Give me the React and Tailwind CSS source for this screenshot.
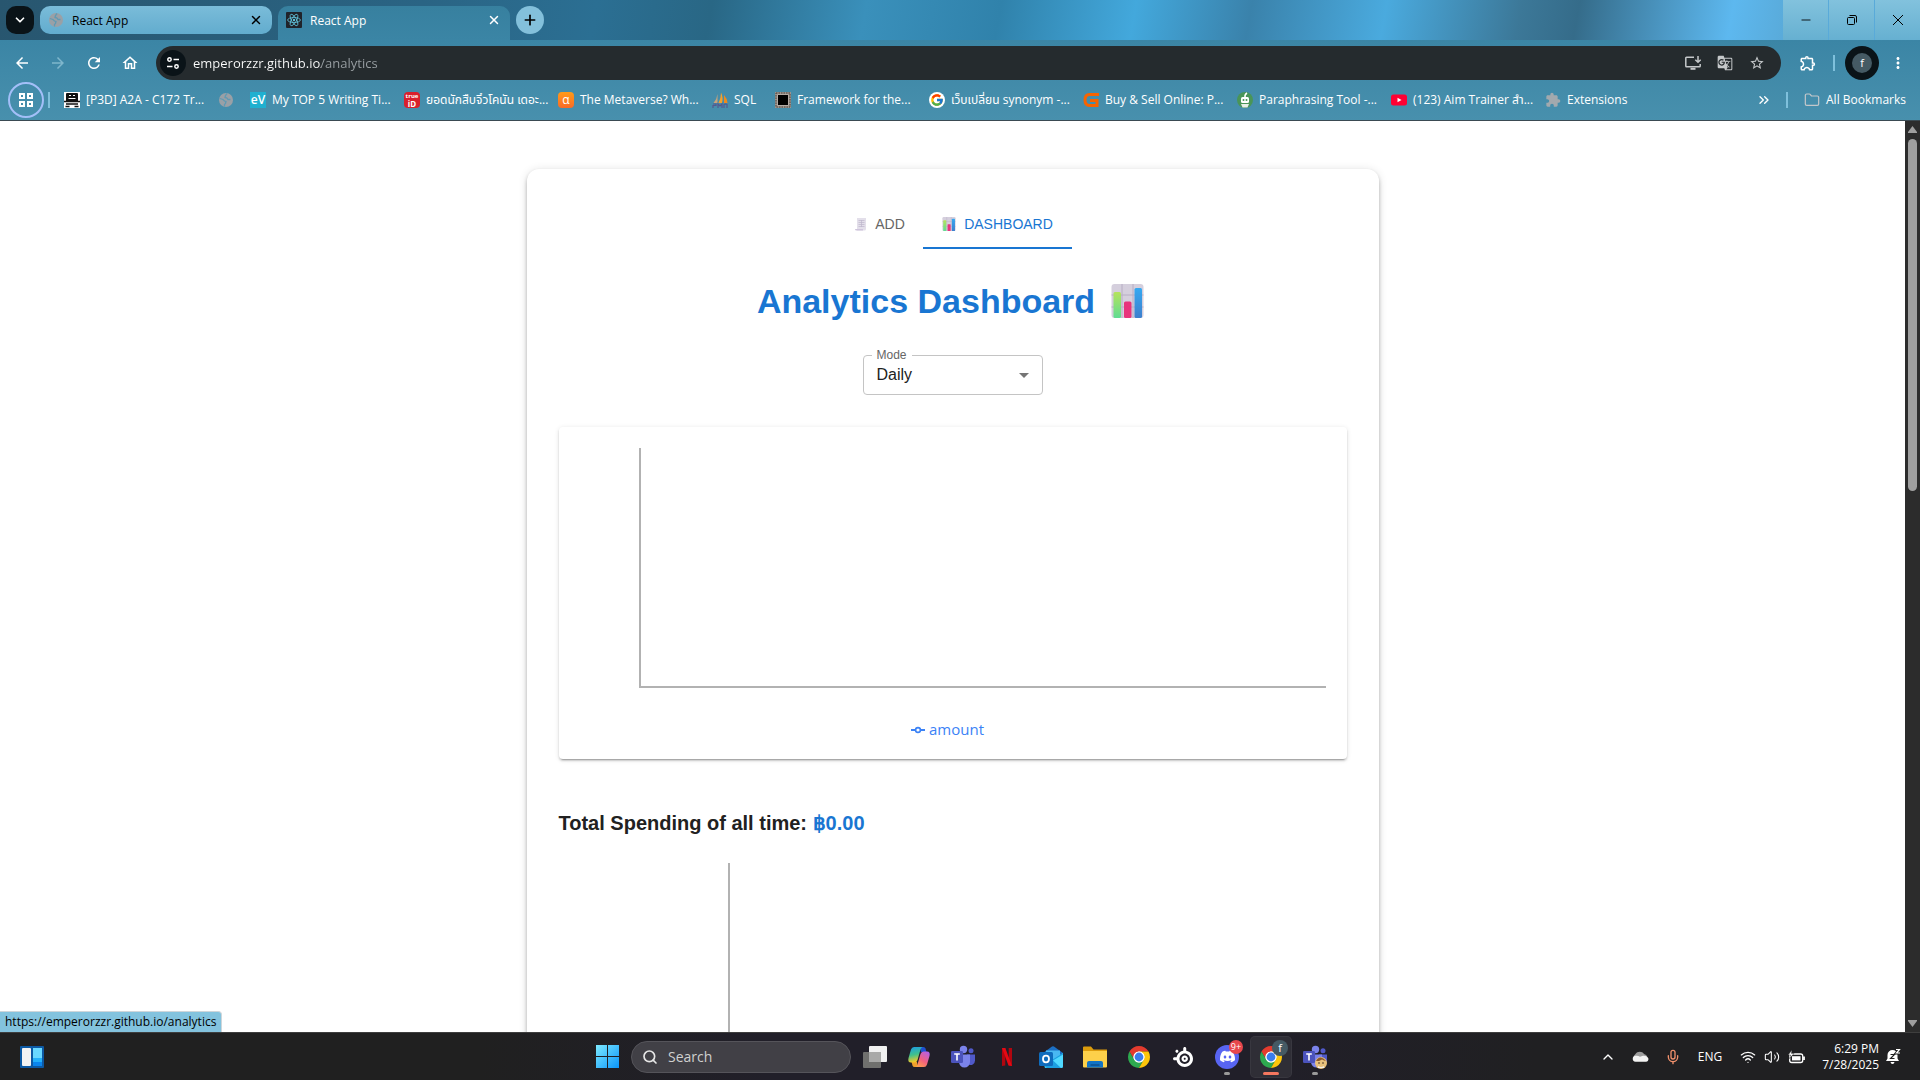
import React from "react";
import {
  MdArrowBack, MdArrowForward, MdRefresh, MdOutlineHome, MdOutlineInstallDesktop, MdGTranslate,
  MdStarBorder, MdOutlineExtension, MdExtension, MdMoreVert, MdArrowDropDown,
} from "react-icons/md";
import { FcGoogle } from "react-icons/fc";
import { SiDiscord, SiSteelseries } from "react-icons/si";
import { Plus, X, ChevronDown, ChevronUp, ChevronsRight, Folder, Search, Mic, Wifi, Volume2, Minus } from "lucide-react";

const ui = "font-['Open_Sans','Noto_Sans','Noto_Sans_Thai',sans-serif]";
const arial = "font-['Liberation_Sans',Arial,sans-serif]";

/* ---------- drawings ---------- */

function ReactLogo() {
  return (
    <svg viewBox="0 0 16 16" className="size-4 shrink-0">
      <rect width="16" height="16" rx="1" fill="#20232a" />
      <g fill="none" stroke="#61c5dd" strokeWidth="0.8">
        <ellipse cx="8" cy="8" rx="6.4" ry="2.5" />
        <ellipse cx="8" cy="8" rx="6.4" ry="2.5" transform="rotate(60 8 8)" />
        <ellipse cx="8" cy="8" rx="6.4" ry="2.5" transform="rotate(120 8 8)" />
      </g>
      <circle cx="8" cy="8" r="1.2" fill="#61c5dd" />
    </svg>
  );
}

function Globe() {
  return (
    <svg viewBox="0 0 16 16" className="size-4 shrink-0">
      <circle cx="8" cy="8" r="7" fill="#9aa0a6" />
      <path d="M1.800 6.500 5 7.500l1.500 1.500 1.500.5-.5 2-1 1v2M9 1.500 7.500 3.500l-.5 2 2 .5 1 1.500h2.500" fill="none" stroke="#5f9ab4" strokeWidth="1.300" />
    </svg>
  );
}

function Tune() {
  return (
    <svg viewBox="0 0 16 16" className="size-4" fill="none" stroke="#fff" strokeWidth="1.5">
      <circle cx="4.5" cy="4.5" r="1.7" />
      <path d="M8.5 4.5H14M2 11.5h5.5" />
      <circle cx="11.5" cy="11.5" r="1.7" />
    </svg>
  );
}

function ChartEmoji({ className }) {
  return (
    <svg viewBox="0 0 32 34" className={className} aria-hidden="true">
      <defs>
        <linearGradient id="cg" x2="0" y2="1"><stop stopColor="#b5e35c" /><stop offset="1" stopColor="#5fdc93" /></linearGradient>
        <linearGradient id="cb" x2="0" y2="1"><stop stopColor="#35a9f2" /><stop offset="1" stopColor="#3d7fcd" /></linearGradient>
      </defs>
      <rect width="32" height="34" rx="3" fill="#d5cfdd" />
      <path d="M0 11h32M0 23h32M10.5 0v34M21.5 0v34" stroke="#b7aec4" strokeWidth="1" />
      <rect x="2" y="8" width="7.5" height="26" rx="1.5" fill="url(#cg)" />
      <rect x="12.5" y="17.500" width="7.5" height="16.500" rx="1.5" fill="#e8347c" />
      <rect x="23" y="4" width="7.500" height="30" rx="1.5" fill="url(#cb)" />
    </svg>
  );
}

function ReceiptEmoji() {
  return (
    <svg viewBox="0 0 12 14" className="h-3.5 w-3" aria-hidden="true">
      <path d="M2 1h9v11a1.500 1.500 0 0 1-1.500 1.500H2z" fill="#e3dfea" />
      <path d="M0 12h8v1.500H1.500A1.500 1.500 0 0 1 0 12z" fill="#cfc5dc" />
      <path d="M3.500 3.500h6M3.500 5.500h6M3.500 7.500h6M3.500 9.500h6M6.500 3v7" stroke="#bdb6cb" strokeWidth="0.7" />
    </svg>
  );
}

function Truck() {
  return (
    <svg viewBox="0 0 16 16" className="size-4 shrink-0">
      <rect width="16" height="16" fill="#fff" />
      <path d="M3 1h10q1 0 1 1v7H2V2q0-1 1-1z" fill="#111" />
      <path d="M5 3.500h2M9 3.500h2M4.500 6.500h7" stroke="#fff" strokeWidth="1" />
      <path d="M0 9.500h16M2 12h12M1.500 14.500h4M10.500 14.500h4" stroke="#111" strokeWidth="1.500" />
    </svg>
  );
}

function Badge({ text, className }) {
  return <span className={`flex size-4 shrink-0 items-center justify-center leading-4 ${className}`}>{text}</span>;
}

function TrueId() {
  return (
    <span className="flex size-4 shrink-0 flex-col items-center justify-center rounded-sm bg-[#d9202c] font-bold text-white">
      <span className="text-[6px] leading-[8px]">true</span>
      <span className="text-[8px] leading-[8px]">iD</span>
    </span>
  );
}

function Sails() {
  return (
    <svg viewBox="0 0 16 16" className="size-4 shrink-0">
      <path d="M5.500 2v9H1.500Q5 7 5.500 2z" fill="#c9a37a" />
      <path d="M9 .5q2.500 5 1 10.500H6.500Q9 6 9 .5z" fill="#f5a12c" />
      <path d="M12 3q3.500 4 3.500 8h-3.500z" fill="#f08a1c" />
      <path d="M1 12h3v1.500H1V16M6 16v-4l2 2 2-2v4M12 16v-3.500l1.500-.5 1.500.5V16" fill="none" stroke="#54588f" strokeWidth="1.200" />
    </svg>
  );
}

function Chip() {
  return (
    <svg viewBox="0 0 16 16" className="size-4 shrink-0">
      <rect width="16" height="16" fill="#9c938c" />
      <rect x="1" y="1" width="14" height="14" fill="none" stroke="#4a4540" strokeWidth="1" strokeDasharray="1.500 1" />
      <rect x="2.500" y="2.500" width="11" height="11" fill="#c9c3bd" />
      <rect x="3" y="3" width="10" height="10" fill="#000" />
    </svg>
  );
}

function GLogo() {
  return (
    <svg viewBox="0 0 16 16" className="size-4 shrink-0">
      <path d="M16 2.500H6.500Q2 2.500 2 8t4.500 5.500H14V8.500H7" fill="none" stroke="#f76300" strokeWidth="3" />
    </svg>
  );
}

function Quill() {
  return (
    <svg viewBox="0 0 16 16" className="size-4 shrink-0">
      <circle cx="8" cy="8" r="8" fill="#499557" />
      <path d="M8 5.500Q7.500 2.500 10 1" fill="none" stroke="#fff" strokeWidth="1.500" />
      <rect x="4" y="5" width="8" height="6" rx="1.500" fill="#fff" />
      <path d="M4 12h8l-1.500 3.500h-5z" fill="#e7efe8" />
      <circle cx="6.500" cy="8" r="1" fill="#499557" /><circle cx="9.500" cy="8" r="1" fill="#499557" />
    </svg>
  );
}

function YouTube() {
  return (
    <svg viewBox="0 0 16 16" className="size-4 shrink-0">
      <rect y="2.500" width="16" height="11" rx="2.500" fill="#ff0033" />
      <path d="M6.500 5.700v4.600l4-2.300z" fill="#fff" />
    </svg>
  );
}

function Chrome() {
  return (
    <svg viewBox="0 0 48 48" className="size-6">
      <circle cx="24" cy="24" r="12" fill="#fff" />
      <path d="M43.050 13H24A11 11 0 0 0 14.470 29.500L4.950 13A22 22 0 0 1 43.050 13z" fill="#e33b2e" />
      <path d="M4.950 13 14.470 29.500A11 11 0 0 0 33.530 29.500L24 46A22 22 0 0 1 4.950 13z" fill="#2da94f" />
      <path d="M24 46 33.530 29.500A11 11 0 0 0 24 13H43.050A22 22 0 0 1 24 46z" fill="#fdc60b" />
      <circle cx="24" cy="24" r="11" fill="#fff" />
      <circle cx="24" cy="24" r="8.800" fill="#3b7ded" />
    </svg>
  );
}

function Teams() {
  return (
    <svg viewBox="0 0 24 24" className="size-6">
      <circle cx="12.500" cy="4.500" r="3.700" fill="#7b83eb" />
      <circle cx="20" cy="5.800" r="2.500" fill="#5059c9" />
      <path d="M16 9.500h8v6a4.500 4.500 0 0 1-6 4.200z" fill="#5059c9" />
      <path d="M8 9.500h11v7.500a5.500 5.500 0 0 1-11 0z" fill="#7b83eb" />
      <rect y="6" width="12" height="12" rx="1.200" fill="#4b53bc" />
      <path d="M3.200 9h5.600M6 9v6.500" stroke="#fff" strokeWidth="1.600" />
    </svg>
  );
}

function Widgets() {
  return (
    <svg viewBox="0 0 24 22" className="h-[22px] w-6">
      <rect width="24" height="22" rx="1" fill="#0c59a4" />
      <rect x="2" y="2" width="9" height="18" rx="1" fill="#f3f3f3" />
      <path d="M13 2h9v10h-9z" fill="#69d8ff" />
      <path d="M13 12h9v4h-9z" fill="#22b0fb" />
      <path d="M13 16h9v4h-9z" fill="#0a85ee" />
    </svg>
  );
}

function WindowsLogo() {
  return (
    <svg viewBox="0 0 23 23" className="size-[23px]">
      <defs><linearGradient id="win" x2="1" y2="1"><stop stopColor="#7deaff" /><stop offset="1" stopColor="#0a95fa" /></linearGradient></defs>
      <path d="M0 0h11v11H0zM12 0h11v11H12zM0 12h11v11H0zM12 12h11v11H12z" fill="url(#win)" />
    </svg>
  );
}

function TaskView() {
  return (
    <svg viewBox="0 0 24 22" className="h-[22px] w-6">
      <rect x="6" width="18" height="16" rx="1" fill="#f1f1f1" />
      <rect y="6" width="18" height="16" rx="1" fill="#70706e" />
      <path d="M6 6h12v10H6z" fill="#a9a9a8" />
    </svg>
  );
}

function Copilot() {
  return (
    <svg viewBox="0 0 24 24" className="size-6">
      <defs>
        <linearGradient id="cpa" x1="0" y1="0" x2="0.200" y2="1"><stop stopColor="#1b9ce8" /><stop offset="0.550" stopColor="#3fc08c" /><stop offset="1" stopColor="#f2c928" /></linearGradient>
        <linearGradient id="cpb" x1="0.800" y1="0" x2="0.200" y2="1"><stop stopColor="#b45fe6" /><stop offset="0.550" stopColor="#f2607e" /><stop offset="1" stopColor="#ffa04d" /></linearGradient>
      </defs>
      <path d="M13 2h3.500q1.500 0 2 1.500L19.500 7H14z" fill="#1f4fcf" />
      <path d="M11 22H7.500q-1.500 0-2-1.500L4.500 17H10z" fill="#f0a02c" />
      <path d="M7 2h8.500q-1.500.5-2 2.500L10.500 15q-.8 2.500-3 2.500H4Q.5 17.500 1.500 13L4 4.500Q4.800 2 7 2z" fill="url(#cpa)" />
      <path d="M17 22H8.500q1.500-.5 2-2.500L13.500 9q.8-2.500 3-2.500H20q3.500 0 2.500 4.500L20 19.500q-.8 2.500-3 2.500z" fill="url(#cpb)" />
    </svg>
  );
}

function Netflix() {
  return (
    <svg viewBox="0 0 10 18" className="h-[18px] w-2.5">
      <path d="M0 0h3.300v17.600L0 18zM6.700 0H10v18l-3.300-.4z" fill="#b1060f" />
      <path d="M0 0h3.300L10 18l-3.500-.4z" fill="#e50914" />
    </svg>
  );
}

function Outlook() {
  return (
    <svg viewBox="0 0 24 24" className="size-6">
      <path d="M4 8 13 1.500Q14 1 15 1.500L24 8v3H4z" fill="#1c6fc4" />
      <path d="M7 5.500h14v9H7z" fill="#49b8f2" />
      <path d="M24 8v13q0 2-2 2H6l-1-3z" fill="#36c5f2" />
      <path d="M24 8 13 15l-8 5 3 3h14q2 0 2-2z" fill="#1c9fe0" />
      <path d="m14 15.500 10-6V21q0 2-2 2z" fill="#50d9ff" />
      <rect y="7" width="14" height="14" rx="1.500" fill="#0f6cbd" />
      <ellipse cx="7" cy="14" rx="3" ry="3.300" fill="none" stroke="#fff" strokeWidth="1.800" />
    </svg>
  );
}

function Explorer() {
  return (
    <svg viewBox="0 0 24 22" className="h-[22px] w-6">
      <path d="M0 1.500Q0 .5 1 .5h7l2.500 3H24V8H0z" fill="#dd9c0c" />
      <path d="M0 5h24v15.500q0 1-1 1H1q-1 0-1-1z" fill="#fdd04a" />
      <path d="M4 21.500V17q0-2 2-2h12q2 0 2 2v4.500z" fill="#1173c4" />
      <path d="M7.500 19h9" stroke="#0b5191" strokeWidth="1.500" />
    </svg>
  );
}

function Cloud() {
  return (
    <svg viewBox="0 0 17 11" className="h-[11px] w-[17px]">
      <path d="M4 10a4 4 0 0 1-.5-7A5 5 0 0 1 12 3a4 4 0 0 1 2 7z" fill="#9d9d9d" />
      <path d="M3.500 10.800a3 3 0 0 1 .5-6q2-.3 4 1l3-1q4-.4 5.500 3-.2 3-2.500 3z" fill="#f3f3f3" />
    </svg>
  );
}

function Battery() {
  return (
    <svg viewBox="0 0 18 14" className="h-3.5 w-[18px]">
      <rect x="1.700" y="4" width="13" height="8.500" rx="2" fill="none" stroke="#fff" strokeWidth="1.300" />
      <rect x="4" y="6.200" width="8.500" height="4.200" fill="#fff" />
      <path d="M16 6.500v3.500" stroke="#fff" strokeWidth="1.800" />
      <path d="M4 0 0 5h2.500L1.500 8.500 6 3.500H3.500z" fill="#fff" stroke="#202020" strokeWidth="0.500" />
    </svg>
  );
}

function BellSnooze() {
  return (
    <svg viewBox="0 0 16 17" className="h-[17px] w-4">
      <path d="M7.500 2a5 5 0 0 1 5 5v3.500l1.500 2.500H1l1.500-2.500V7a5 5 0 0 1 5-5zM5.500 14h4q-.3 2-2 2t-2-2z" fill="#fff" />
      <path d="M5.500 6.500h4l-4 4h4" fill="none" stroke="#202020" strokeWidth="1.100" />
      <path d="M11 1.500h3.500L11.500 5H15" fill="none" stroke="#202020" strokeWidth="3" />
      <path d="M11 1.500h3.500L11.500 5H15" fill="none" stroke="#fff" strokeWidth="1.200" />
    </svg>
  );
}

/* ---------- browser chrome ---------- */

function TabStrip() {
  return (
    <div className="flex h-10 shrink-0 items-stretch bg-[linear-gradient(100deg,#28566f_0%,#2a6484_22%,#2b6f93_31%,#296785_37%,#3a90bb_45%,#3082ab_52%,#43a8dc_59%,#3a82ab_65%,#4aaade_72%,#3c7898_79%,#356c8a_82%,#5db8ef_90%,#59aad9_93%)]">
      <div className="flex items-center pl-1.5">
        <button aria-label="Search tabs" className="flex size-7 items-center justify-center rounded-[10px] bg-[#0a1318] text-white">
          <ChevronDown className="size-3.5" strokeWidth={3} />
        </button>
      </div>
      <div className="my-1.5 ml-1.5 flex w-[232px] items-center rounded-[10px] bg-linear-to-b from-[#7abcd9] to-[#62acce] px-2 text-black">
        <Globe />
        <span className="ml-2 flex-1 pt-0.5 text-xs">React App</span>
        <button aria-label="Close tab" className="flex size-4 items-center justify-center"><X className="size-3.5" strokeWidth={2.5} /></button>
      </div>
      <div className="mt-1.5 ml-1.5 flex w-[232px] items-center rounded-t-[10px] bg-linear-to-b from-[#37809f] to-[#3b85a5] px-2 pb-1.5 text-white">
        <ReactLogo />
        <span className="ml-2 flex-1 pt-0.5 text-xs">React App</span>
        <button aria-label="Close tab" className="flex size-4 items-center justify-center"><X className="size-3.5" strokeWidth={2.5} /></button>
      </div>
      <div className="flex flex-1 items-center pl-1.5">
        <button aria-label="New tab" className="flex size-7 items-center justify-center rounded-full bg-[#83c0db] text-black">
          <Plus className="size-4" strokeWidth={2.5} />
        </button>
      </div>
      <div className="flex gap-px text-black">
        <button aria-label="Minimize" className="flex w-[45px] items-center justify-center bg-linear-to-b from-[#82c2dd] to-[#66b0d1]"><Minus className="size-3.5" strokeWidth={1.5} /></button>
        <button aria-label="Restore" className="flex w-[45px] items-center justify-center bg-linear-to-b from-[#82c2dd] to-[#66b0d1]">
          <svg viewBox="0 0 10 10" className="size-2.5" fill="none" stroke="#000"><rect x="0.500" y="2.500" width="7" height="7" rx="1" /><path d="M2.500.5H8Q9.500.5 9.500 2v5.500" /></svg>
        </button>
        <button aria-label="Close" className="flex w-[45px] items-center justify-center bg-linear-to-b from-[#82c2dd] to-[#66b0d1]">
          <svg viewBox="0 0 10 10" className="size-2.5" stroke="#000"><path d="m0 0 10 10M10 0 0 10" /></svg>
        </button>
      </div>
    </div>
  );
}

function Toolbar() {
  return (
    <div className="flex h-[46px] shrink-0 items-center pr-[13px] pl-[13px] text-white">
      <div className="flex gap-[18px] pr-[17px]">
        <button aria-label="Back"><MdArrowBack className="size-[18px]" /></button>
        <button aria-label="Forward" className="text-[#7fb6cc]"><MdArrowForward className="size-[18px]" /></button>
        <button aria-label="Reload"><MdRefresh className="size-[18px]" /></button>
        <button aria-label="Home"><MdOutlineHome className="size-[18px]" /></button>
      </div>
      <div className="flex h-[34px] flex-1 items-center rounded-full bg-[#252b2e] pr-4 pl-1">
        <button aria-label="View site information" className="flex size-[26px] items-center justify-center rounded-full bg-[#0a1318]"><Tune /></button>
        <input
          aria-label="Address and search bar"
          defaultValue="emperorzzr.github.io/analytics"
          className="ml-[7px] min-w-0 flex-1 bg-[linear-gradient(90deg,#fff_128px,#9aa0a4_128px)] bg-clip-text pt-0.5 text-[13px] text-transparent outline-none"
        />
        <div className="flex gap-4 text-[#c5c8ca]">
          <button aria-label="Install app">
            <svg viewBox="0 0 16 16" className="size-4" fill="none" stroke="currentColor" strokeWidth="1.500"><path d="M9 2.200H1.500Q.8 2.200.8 3v8q0 .8.700.8h13q.7 0 .7-.8V9" /><path d="M5.500 13.800h5" strokeWidth="2" /><path d="M13 1v6M10.300 4.800 13 7.300l2.700-2.500" /></svg>
          </button>
          <button aria-label="Translate this page"><MdGTranslate className="size-4" /></button>
          <button aria-label="Bookmark this tab"><MdStarBorder className="size-4" /></button>
        </div>
      </div>
      <button aria-label="Extensions" className="ml-[18px]"><MdOutlineExtension className="size-[18px]" /></button>
      <span className="mx-4 h-4 w-0.5 bg-[#7fc0dc]" />
      <button aria-label="Profile" className="-ml-1.5 flex size-[34px] items-center justify-center rounded-full bg-[#0a1318]">
        <span className="flex size-5 items-center justify-center rounded-full bg-[#455a64] text-[11px]">f</span>
      </button>
      <button aria-label="Menu" className="ml-2.5"><MdMoreVert className="size-[18px]" /></button>
    </div>
  );
}

const bookmarks = [
  [<Truck />, "[P3D] A2A - C172 Tr...", "w-[154px]"],
  [<Globe />, "", "w-8"],
  [<Badge text="eV" className="bg-[#20b0d0] text-[12px] font-semibold text-white" />, "My TOP 5 Writing Ti...", "w-[154px]"],
  [<TrueId />, "ยอดนักสืบจิ๋วโคนัน เดอะ...", "w-[154px]"],
  [<Badge text="α" className="rounded-sm bg-linear-to-b from-[#ff9a18] to-[#f96a25] text-xs text-white" />, "The Metaverse? Wh...", "w-[154px]"],
  [<Sails />, "SQL", "w-[63px]"],
  [<Chip />, "Framework for the...", "w-[154px]"],
  [<span className="flex size-4 shrink-0 items-center justify-center rounded-full bg-white"><FcGoogle className="size-3.5" /></span>, "เว็บเปลี่ยน synonym -...", "w-[154px]"],
  [<GLogo />, "Buy & Sell Online: P...", "w-[154px]"],
  [<Quill />, "Paraphrasing Tool -...", "w-[154px]"],
  [<YouTube />, "(123) Aim Trainer สำ...", "w-[154px]"],
  [<MdExtension className="size-4 shrink-0 text-[#a2a9ae]" />, "Extensions", "w-[90px]"],
];

function BookmarksBar() {
  return (
    <div className="flex h-[35px] shrink-0 items-start border-b border-[#3a4a52] text-xs text-white">
      <div className="flex h-7 w-full items-center pr-3.5 pl-2">
        <button aria-label="Apps" className="flex size-9 shrink-0 items-center justify-center rounded-full border-2 border-[#a3bff8]">
          <svg viewBox="0 0 14 14" className="size-3.5" fill="none" stroke="#fff" strokeWidth="2"><path d="M1 1h4v4H1zM9 1h4v4H9zM1 9h4v4H1zM9 9h4v4H9z" /></svg>
        </button>
        <span className="mr-3.5 ml-1 h-4 w-0.5 shrink-0 bg-[#7fc0dc]" />
        <nav aria-label="Bookmarks" className="flex h-7 min-w-0 flex-1 overflow-hidden">
          {bookmarks.map(([icon, label, width], i) => (
            <a key={i} href="#" aria-label={label || "Bookmark"} className={`flex shrink-0 items-center gap-1.5 whitespace-nowrap ${width}`}>
              {icon}
              {label && <span className="leading-5">{label}</span>}
            </a>
          ))}
        </nav>
        <button aria-label="More bookmarks"><ChevronsRight className="size-4" /></button>
        <span className="mr-4 ml-3.5 h-4 w-0.5 bg-[#7fc0dc]" />
        <button className="flex items-center gap-1.5 whitespace-nowrap">
          <Folder className="size-4 text-[#c3c7ca]" strokeWidth={1.8} />
          All Bookmarks
        </button>
      </div>
    </div>
  );
}

/* ---------- page ---------- */

function Page() {
  return (
    <main className={`min-w-0 flex-1 overflow-hidden bg-white text-[#212121] ${arial}`}>
      <div className="mx-auto w-full max-w-[900px] px-6 pt-12">
        <section className="h-[1200px] rounded-xl bg-white p-8 shadow-[0_2px_4px_-1px_rgba(0,0,0,0.2),0_4px_5px_0_rgba(0,0,0,0.14),0_1px_10px_0_rgba(0,0,0,0.12)]">
          <div role="tablist" className="flex justify-center text-sm">
            <button role="tab" aria-selected="false" className="flex h-12 w-[90px] items-center justify-center gap-2 pb-[3px] pl-1 text-[#666]">
              <ReceiptEmoji />ADD
            </button>
            <button role="tab" aria-selected="true" className="flex h-12 w-[149px] items-center justify-center gap-2 border-b-2 border-[#1976d2] pb-px text-[#1976d2]">
              <ChartEmoji className="h-3.5 w-3.5" />DASHBOARD
            </button>
          </div>

          <h1 className="mt-[30px] flex items-center justify-center gap-4 pr-1 text-[34px] leading-[44px] font-bold text-[#1976d2]">
            Analytics Dashboard
            <ChartEmoji className="h-[34px] w-[33px]" />
          </h1>

          <div className="relative mx-auto mt-8 w-[180px]">
            <label htmlFor="mode" className="absolute -top-2 left-[9px] bg-white px-[5px] text-xs text-[#666]">Mode</label>
            <select id="mode" defaultValue="Daily" className="h-10 w-full appearance-none rounded border border-[#c4c4c4] bg-transparent px-[13px] text-base outline-none">
              <option>Daily</option>
              <option>Monthly</option>
            </select>
            <MdArrowDropDown className="pointer-events-none absolute top-2 right-[7px] size-6 text-[#757575]" />
          </div>

          <div className="mt-8 rounded p-4 shadow-[0_3px_1px_-2px_rgba(0,0,0,0.2),0_2px_2px_0_rgba(0,0,0,0.14),0_1px_5px_0_rgba(0,0,0,0.12)]">
            <div className="h-[300px] pt-[5px]">
              <div className="mr-[5px] ml-16 h-60 border-b-2 border-l-2 border-[#b2b2b2]" />
              <div className={`flex items-center justify-center gap-1 pt-[29px] pr-2.5 text-[15px] leading-6 text-[#3b82f6] ${ui}`}>
                <svg viewBox="0 0 14 8" className="mt-0.5 h-2 w-3.5" fill="none" stroke="#3b82f6" strokeWidth="2"><path d="M0 4h4.500M9.500 4H14" /><circle cx="7" cy="4" r="2.400" strokeWidth="1.600" /></svg>
                amount
              </div>
            </div>
          </div>

          <h2 className="mt-12 text-xl leading-8 font-bold">
            Total Spending of all time: <span className="text-[#1976d2]">฿0.00</span>
          </h2>

          <div className="mt-6 ml-[169px] h-[320px] border-l-2 border-[#b2b2b2]" />
        </section>
      </div>
    </main>
  );
}

function Scrollbar() {
  return (
    <div className="flex w-[15px] shrink-0 flex-col items-center bg-[#2c2c2c] py-[5px]">
      <svg viewBox="0 0 9 7" className="h-[7px] w-[9px]" fill="#9f9f9f"><path d="M4.500 0 9 6v1H0V6z" /></svg>
      <div className="mt-1.5 h-[352px] w-[9px] rounded-full bg-[#9f9f9f]" />
      <div className="flex-1" />
      <svg viewBox="0 0 9 7" className="h-[7px] w-[9px]" fill="#9f9f9f"><path d="M4.500 7 9 1V0H0v1z" /></svg>
    </div>
  );
}

/* ---------- taskbar ---------- */

function Slot({ label, children, mark, active }) {
  return (
    <button aria-label={label} className={`relative mx-0.5 flex h-10 w-10 items-center justify-center rounded ${active ? "bg-[#2f2e36] ring-1 ring-[#38373f]" : ""}`}>
      {children}
      {mark && <span className={`absolute bottom-0.5 h-[3px] rounded-full ${active ? "w-4 bg-[#f5775f]" : "w-1.5 bg-[#9a9a9a]"}`} />}
    </button>
  );
}

function Taskbar() {
  return (
    <footer className="grid h-12 shrink-0 grid-cols-[1fr_auto_1fr] items-center border-t border-[#3e3e3e] bg-[linear-gradient(90deg,#202020_0%,#202020_25%,#211f29_40%,#211f29_65%,#202022_80%)] text-white">
      <div className="flex items-center pl-5"><button aria-label="Widgets"><Widgets /></button></div>
      <div className="flex items-center pl-0.5">
        <Slot label="Start"><WindowsLogo /></Slot>
        <label className="mx-0.5 flex h-8 w-[220px] items-center rounded-full border border-[#55545a] bg-[#414046] pl-2.5">
          <Search className="size-4 text-[#e6e6e6]" strokeWidth={2.5} />
          <input aria-label="Search" placeholder="Search" className="ml-2.5 min-w-0 flex-1 bg-transparent text-sm leading-5 outline-none placeholder:text-[#d0d0d0]" />
        </label>
        <Slot label="Task view"><TaskView /></Slot>
        <Slot label="Copilot"><Copilot /></Slot>
        <Slot label="Teams"><Teams /></Slot>
        <Slot label="Netflix"><Netflix /></Slot>
        <Slot label="Outlook"><Outlook /></Slot>
        <Slot label="File Explorer"><Explorer /></Slot>
        <Slot label="Chrome"><Chrome /></Slot>
        <Slot label="SteelSeries"><SiSteelseries className="size-5" /></Slot>
        <Slot label="Discord" mark>
          <span className="flex size-6 items-center justify-center rounded-full bg-[#5865f2]"><SiDiscord className="size-[15px]" /></span>
          <span className="absolute top-[3px] right-1 flex size-3.5 items-center justify-center rounded-full bg-[#e8474c] text-[9px] leading-[14px]">9+</span>
        </Slot>
        <Slot label="Chrome window" mark active>
          <Chrome />
          <span className="absolute top-[3px] right-[3px] flex size-4 items-center justify-center rounded-full bg-[#455a64] text-[11px] leading-4">f</span>
        </Slot>
        <Slot label="Teams chat" mark>
          <Teams />
          <svg viewBox="0 0 12 12" className="absolute right-2 bottom-2 size-3">
            <circle cx="6" cy="6" r="6" fill="#e9c27c" />
            <path d="M1 4q2-4 5-3.500T11 4L9 3.500 7 2.500 4 4z" fill="#8b5a2b" />
            <circle cx="4" cy="6" r="0.800" fill="#3b2a20" /><circle cx="8" cy="6" r="0.800" fill="#3b2a20" />
            <path d="M3 9q3 2 6 0v2H3z" fill="#f3efe8" />
          </svg>
        </Slot>
      </div>
      <div className="flex items-center justify-end pr-[19px]">
        <button aria-label="Show hidden icons"><ChevronUp className="size-4" /></button>
        <span className="ml-4"><Cloud /></span>
        <Mic className="ml-4 size-4 text-[#f0906c]" />
        <button className="ml-[17px] text-xs">ENG</button>
        <Wifi className="ml-[18px] size-4" />
        <Volume2 className="ml-2 size-4" strokeWidth={1.600} />
        <span className="ml-2"><Battery /></span>
        <div className="ml-4 text-right text-xs leading-4">
          <div>6:29 PM</div>
          <div>7/28/2025</div>
        </div>
        <button aria-label="Notifications" className="ml-1.5"><BellSnooze /></button>
      </div>
    </footer>
  );
}

export default function App() {
  return (
    <div className={`flex h-screen flex-col overflow-hidden bg-white ${ui}`}>
      <header className="shrink-0 bg-[#4790ad]">
        <TabStrip />
        <div className="bg-linear-to-b from-[#3b85a5] to-[#4890ad]">
          <Toolbar />
          <BookmarksBar />
        </div>
      </header>
      <div className="relative flex min-h-0 flex-1">
        <Page />
        <Scrollbar />
        <div className="absolute bottom-0 left-0 rounded-tr border-t border-r border-[#cfd6da] bg-[#83c3de] px-[5px] text-xs leading-5 text-black">
          https://emperorzzr.github.io/analytics
        </div>
      </div>
      <Taskbar />
    </div>
  );
}
